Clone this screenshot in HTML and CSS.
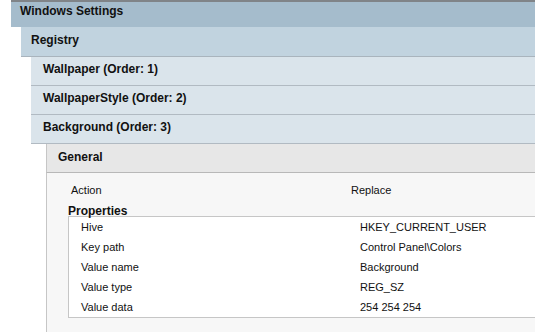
FILE: index.html
```html
<!DOCTYPE html>
<html lang="en">
<head>
    <meta charset="UTF-8">
    <meta name="viewport" content="width=device-width, initial-scale=1.0">
    <title>Windows Settings</title>
    <link rel="stylesheet" href="styles.css">
</head>
<body>
    <div class="tree">
        <div class="head lvl1">Windows Settings</div>
        <div class="kids">
            <div class="head lvl2">Registry</div>
            <div class="kids">
                <div class="head lvl3">Wallpaper (Order: 1)</div>
                <div class="head lvl3">WallpaperStyle (Order: 2)</div>
                <div class="head lvl3">Background (Order: 3)</div>
                <div class="kids wide">
                    <div class="head lvl4">General</div>
                    <div class="panel">
                        <div class="row action">
                            <span class="label">Action</span>
                            <span class="value">Replace</span>
                        </div>
                        <div class="props-title">Properties</div>
                        <div class="props">
                            <div class="row">
                                <span class="label">Hive</span>
                                <span class="value">HKEY_CURRENT_USER</span>
                            </div>
                            <div class="row">
                                <span class="label">Key path</span>
                                <span class="value">Control Panel\Colors</span>
                            </div>
                            <div class="row">
                                <span class="label">Value name</span>
                                <span class="value">Background</span>
                            </div>
                            <div class="row">
                                <span class="label">Value type</span>
                                <span class="value">REG_SZ</span>
                            </div>
                            <div class="row">
                                <span class="label">Value data</span>
                                <span class="value">254 254 254</span>
                            </div>
                        </div>
                    </div>
                </div>
            </div>
        </div>
    </div>
</body>
</html>
```

FILE: styles.css
```css
html, body {
    overflow: hidden;
}

body {
    font-family: "Liberation Sans", Arial, sans-serif;
    font-size: 11px;
    color: #111;
    margin: 0;
    padding: 0;
    background-color: #fff;
}

.tree {
    margin-left: 11px;
}

.kids {
    padding-left: 10px;
}

.kids.wide {
    padding-left: 15px;
}

/* section header bars */
.head {
    font-size: 12px;
    font-weight: bold;
    box-sizing: border-box;
}

.lvl1 {
    background-color: #a5bccc;
    border-top: 2px solid #808488;
    height: 27px;
    padding: 2px 0 0 9px;
}

.lvl2 {
    background-color: #c1d3df;
    border-bottom: 1px solid #a9b4bd;
    height: 30px;
    padding: 6px 0 0 10px;
}

.lvl3 {
    background-color: #dae4eb;
    border-bottom: 1px solid #b1bac2;
    height: 29px;
    padding: 5px 0 0 12px;
}

.lvl4 {
    background-color: #e7e7e7;
    border-left: 1px solid #c6c6c6;
    border-bottom: 1px solid #b8b8b8;
    height: 29px;
    padding: 6px 0 0 11px;
}

.panel {
    box-sizing: border-box;
    background-color: #f7f7f7;
    border-left: 1px solid #c6c6c6;
    padding-top: 9px;
    height: 159px;
}

.row {
    display: grid;
    grid-template-columns: 279px 1fr;
    line-height: 20px;
    padding-left: 12px;
}

.row.action {
    grid-template-columns: 280px 1fr;
    line-height: 16px;
    padding-left: 24px;
}

.props-title {
    font-weight: bold;
    font-size: 12px;
    line-height: 13px;
    margin: 7px 0 -2px 21px;
}

.props {
    margin-left: 21px;
    margin-right: -4px;
    background-color: #fff;
    border: 1px solid #c6c6c6;
}
```
